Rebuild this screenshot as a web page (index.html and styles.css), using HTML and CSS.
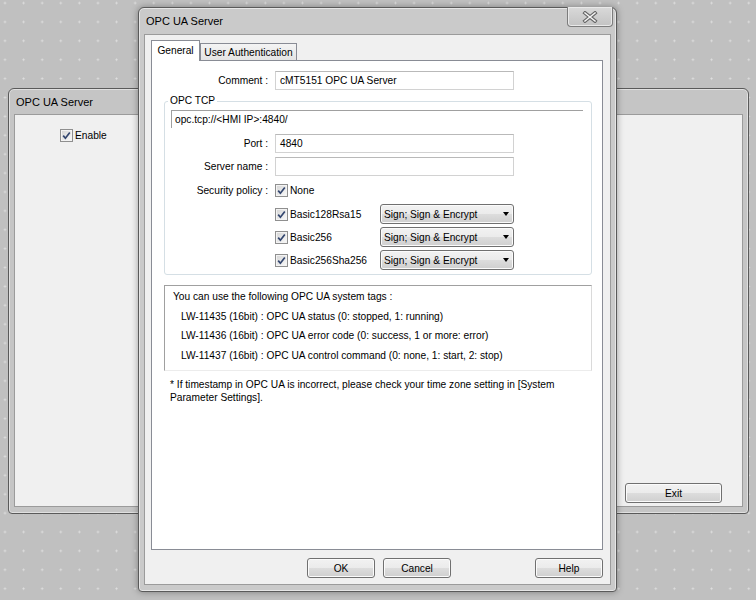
FILE: index.html
```html
<!DOCTYPE html>
<html lang="en">

<head>
  <meta charset="UTF-8">
  <meta name="viewport" content="width=device-width, initial-scale=1.0">
  <title>OPC UA Server</title>

  <link rel="stylesheet" href="styles.css">
</head>

<body>
  <div class="desk">

    <!-- window behind -->
    <div class="win back">
      <div class="caption">OPC UA Server</div>
      <div class="client back-client">
        <label class="check">
          <span class="box"><svg width="11" height="11" viewBox="0 0 11 11"><path d="M2.2 5.6 L4.4 8.2 L8.8 2.4" fill="none" stroke="#33466f" stroke-width="1.7"/></svg></span>
          Enable
        </label>
        <button type="button" class="btn exit">Exit</button>
      </div>
    </div>

    <!-- dialog -->
    <div class="win front">
      <div class="caption">
        OPC UA Server
        <span class="close">
          <svg width="16" height="12" viewBox="0 0 16 12"><path d="M3 2 L13 10 M13 2 L3 10" stroke="#666" stroke-width="3.6" stroke-linecap="square"/><path d="M3 2 L13 10 M13 2 L3 10" stroke="#f4f4f4" stroke-width="1.6" stroke-linecap="square"/></svg>
        </span>
      </div>

      <div class="client">
        <div class="tabs">
          <div class="tab active">General</div>
          <div class="tab">User Authentication</div>
        </div>

        <div class="panel">
          <div class="row">
            <span class="lbl">Comment :</span>
            <div class="input">cMT5151 OPC UA Server</div>
          </div>

          <fieldset class="group">
            <legend>OPC TCP</legend>
            <div class="url">opc.tcp://&lt;HMI IP&gt;:4840/</div>

            <div class="row port">
              <span class="lbl">Port :</span>
              <div class="input">4840</div>
            </div>
            <div class="row name">
              <span class="lbl">Server name :</span>
              <div class="input"></div>
            </div>
            <div class="row security">
              <span class="lbl">Security policy :</span>
              <label class="check">
                <span class="box"><svg width="11" height="11" viewBox="0 0 11 11"><path d="M2.2 5.6 L4.4 8.2 L8.8 2.4" fill="none" stroke="#33466f" stroke-width="1.7"/></svg></span>
                None
              </label>
            </div>

            <div class="row policy first">
              <span class="lbl"></span>
              <label class="check">
                <span class="box"><svg width="11" height="11" viewBox="0 0 11 11"><path d="M2.2 5.6 L4.4 8.2 L8.8 2.4" fill="none" stroke="#33466f" stroke-width="1.7"/></svg></span>
                Basic128Rsa15
              </label>
              <div class="select">Sign; Sign &amp; Encrypt<span class="arrow"></span></div>
            </div>
            <div class="row policy">
              <span class="lbl"></span>
              <label class="check">
                <span class="box"><svg width="11" height="11" viewBox="0 0 11 11"><path d="M2.2 5.6 L4.4 8.2 L8.8 2.4" fill="none" stroke="#33466f" stroke-width="1.7"/></svg></span>
                Basic256
              </label>
              <div class="select">Sign; Sign &amp; Encrypt<span class="arrow"></span></div>
            </div>
            <div class="row policy">
              <span class="lbl"></span>
              <label class="check">
                <span class="box"><svg width="11" height="11" viewBox="0 0 11 11"><path d="M2.2 5.6 L4.4 8.2 L8.8 2.4" fill="none" stroke="#33466f" stroke-width="1.7"/></svg></span>
                Basic256Sha256
              </label>
              <div class="select">Sign; Sign &amp; Encrypt<span class="arrow"></span></div>
            </div>
          </fieldset>

          <div class="info">
            <p>You can use the following OPC UA system tags :</p>
            <p class="tag">LW-11435 (16bit) : OPC UA status (0: stopped, 1: running)</p>
            <p class="tag">LW-11436 (16bit) : OPC UA error code (0: success, 1 or more: error)</p>
            <p class="tag">LW-11437 (16bit) : OPC UA control command (0: none, 1: start, 2: stop)</p>
          </div>

          <p class="note">* If timestamp in OPC UA is incorrect, please check your time zone setting in [System<br>Parameter Settings].</p>
        </div>

        <div class="actions">
          <button type="button" class="btn ok">OK</button>
          <button type="button" class="btn cancel">Cancel</button>
          <button type="button" class="btn">Help</button>
        </div>
      </div>
    </div>

  </div>
</body>

</html>
```

FILE: styles.css
```css
* {
  box-sizing: border-box;
}

body {
  margin: 0;
  font-family: "Liberation Sans", Arial, sans-serif;
  font-size: 10.2px;
  color: #000;
  background-color: #c0c0c0;
  background-image: radial-gradient(circle, #e0e0e0 0.8px, transparent 1.3px);
  background-size: 18.6px 18.9px;
  background-position: -4.3px -6.4px;
}

.desk {
  position: relative;
  width: 756px;
  height: 600px;
  overflow: hidden;
}

/* window frames */
.win {
  position: absolute;
  display: flex;
  flex-direction: column;
  border: 1px solid #5a5a5a;
  border-radius: 6px 6px 4px 4px;
  padding: 0 5px 6px 5px;
}

.back {
  left: 8px;
  top: 88px;
  width: 741px;
  height: 426px;
  background-color: #c5c5c5;
  box-shadow: inset 0 0 0 1px #e0e0e0;
}

.front {
  left: 138px;
  top: 7px;
  width: 479px;
  height: 585px;
  background-color: #cacaca;
  box-shadow: inset 0 0 0 1px #e6e6e6, 0 0 7px rgba(0, 0, 0, 0.35);
}

.caption {
  display: flex;
  align-items: center;
  height: 27px;
  padding-left: 2px;
  font-size: 11px;
}

.back .caption {
  height: 25px;
}

.close {
  display: flex;
  align-items: center;
  justify-content: center;
  align-self: flex-start;
  width: 46px;
  height: 20px;
  margin: -1px -2px 0 auto;
  border: 1px solid #7c7c7c;
  border-top: none;
  border-radius: 0 0 4px 4px;
  background: linear-gradient(#d9d9d9, #c3c3c3);
  box-shadow: inset 0 0 0 1px #e9e9e9;
}

.client {
  flex: 1;
  display: flex;
  flex-direction: column;
  background-color: #f0f0f0;
  border: 1px solid #9b9b9b;
  padding: 5px 7px 6px 6px;
}

.back-client {
  padding: 14px 20px 3px 45px;
}

/* buttons */
.btn {
  width: 68px;
  height: 20px;
  padding: 0;
  font: inherit;
  color: #000;
  border: 1px solid #707070;
  border-radius: 3px;
  background: linear-gradient(#f2f2f2 0%, #ebebeb 50%, #dddddd 50%, #cfcfcf 100%);
  box-shadow: inset 0 0 0 1px #fbfbfb;
}

.exit {
  width: 97px;
  margin-top: auto;
  align-self: flex-end;
}

.actions {
  display: flex;
  justify-content: flex-end;
  margin-top: 8px;
}

.ok {
  margin-right: 8px;
}

.cancel {
  margin-right: 84px;
}

/* tabs */
.tabs {
  position: relative;
  z-index: 1;
  display: flex;
  align-items: flex-end;
  height: 21px;
  margin-bottom: -1px;
}

.tab {
  display: flex;
  align-items: center;
  justify-content: center;
  border: 1px solid #898c95;
  border-bottom: none;
}

.tab.active {
  width: 49px;
  height: 21px;
  padding-bottom: 2px;
  background-color: #fff;
}

.tab:not(.active) {
  width: 97px;
  height: 17px;
  margin-bottom: 1px;
  background: linear-gradient(#f4f4f4, #e4e4e4);
}

.panel {
  height: 490px;
  padding: 10px 10px 0 12px;
  background-color: #fff;
  border: 1px solid #898c95;
}

/* form rows */
.row {
  display: flex;
  align-items: center;
}

.lbl {
  flex: none;
  width: 111px;
  padding-right: 7px;
  text-align: right;
}

.group .lbl {
  width: 104px;
}

.input {
  width: 239px;
  height: 19px;
  padding-left: 4px;
  line-height: 17px;
  border: 1px solid #d2d2d2;
  border-top-color: #b9b9b9;
  background-color: #fff;
}

.group {
  margin: 5px 0 0;
  padding: 3px 8px 4px 6px;
  min-width: 0;
  border: 1px solid #d5dfe5;
  border-radius: 3px;
}

.group legend {
  margin-left: -3px;
  padding: 0 2px;
  line-height: 12px;
}

.url {
  height: 18px;
  padding-left: 3px;
  line-height: 17px;
  border-left: 1px solid #a0a0a0;
  border-top: 1px solid #a0a0a0;
}

.port {
  margin-top: 6px;
}

.name {
  margin-top: 4px;
}

.security {
  height: 13px;
  margin-top: 8px;
}

.policy {
  height: 20px;
  margin-top: 3px;
}

.policy.first {
  margin-top: 7px;
}

.check {
  display: flex;
  align-items: center;
  gap: 2px;
}

.policy .check {
  width: 105px;
}

.box {
  display: flex;
  align-items: center;
  justify-content: center;
  width: 13px;
  height: 13px;
  border: 1px solid #8f8f8f;
  background: linear-gradient(135deg, #d4d4d4, #fafafa);
  box-shadow: inset 0 0 0 1px #f3f3f3;
}

.select {
  display: flex;
  align-items: center;
  width: 134px;
  height: 20px;
  padding-left: 3px;
  border: 1px solid #707070;
  border-radius: 3px;
  background: linear-gradient(#f2f2f2 0%, #ebebeb 50%, #dddddd 50%, #cfcfcf 100%);
  box-shadow: inset 0 0 0 1px #fbfbfb;
}

.arrow {
  margin-left: auto;
  margin-right: 4px;
  border-left: 3.5px solid transparent;
  border-right: 3.5px solid transparent;
  border-top: 4px solid #000;
}

/* tags box */
.info {
  height: 86px;
  margin-top: 10px;
  padding-left: 8px;
  padding-top: 1px;
  border: 1px solid;
  border-color: #a0a0a0 #dadada #ececec #a0a0a0;
}

.info p {
  margin: 0;
  line-height: 19.7px;
}

.info .tag {
  padding-left: 8px;
}

.note {
  margin: 7px 0 0;
  padding-left: 6px;
  line-height: 13px;
}
```
